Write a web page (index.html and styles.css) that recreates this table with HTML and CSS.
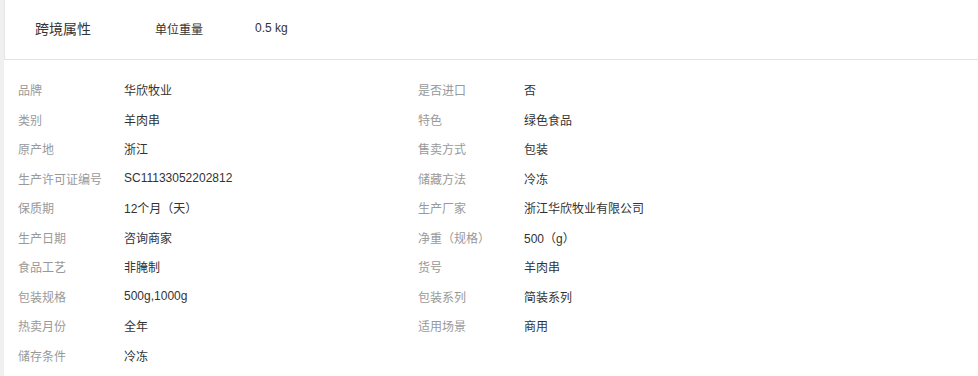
FILE: index.html
```html
<!DOCTYPE html>
<html lang="zh">
<head>
<meta charset="utf-8">
<link rel="stylesheet" href="styles.css">
</head>
<body>
<div class="card">
  <div class="head">
    <div class="head-title">跨境属性</div>
    <div class="head-label">单位重量</div>
    <div class="head-value">0.5 kg</div>
  </div>
  <div class="attrs">
    <div class="row"><span class="k">品牌</span><span class="v">华欣牧业</span></div>
    <div class="row"><span class="k">是否进口</span><span class="v">否</span></div>
    <div class="row"><span class="k">类别</span><span class="v">羊肉串</span></div>
    <div class="row"><span class="k">特色</span><span class="v">绿色食品</span></div>
    <div class="row"><span class="k">原产地</span><span class="v">浙江</span></div>
    <div class="row"><span class="k">售卖方式</span><span class="v">包装</span></div>
    <div class="row"><span class="k">生产许可证编号</span><span class="v">SC11133052202812</span></div>
    <div class="row"><span class="k">储藏方法</span><span class="v">冷冻</span></div>
    <div class="row"><span class="k">保质期</span><span class="v">12个月（天）</span></div>
    <div class="row"><span class="k">生产厂家</span><span class="v">浙江华欣牧业有限公司</span></div>
    <div class="row"><span class="k">生产日期</span><span class="v">咨询商家</span></div>
    <div class="row"><span class="k">净重（规格）</span><span class="v">500（g）</span></div>
    <div class="row"><span class="k">食品工艺</span><span class="v">非腌制</span></div>
    <div class="row"><span class="k">货号</span><span class="v">羊肉串</span></div>
    <div class="row"><span class="k">包装规格</span><span class="v">500g,1000g</span></div>
    <div class="row"><span class="k">包装系列</span><span class="v">简装系列</span></div>
    <div class="row"><span class="k">热卖月份</span><span class="v">全年</span></div>
    <div class="row"><span class="k">适用场景</span><span class="v">商用</span></div>
    <div class="row"><span class="k">储存条件</span><span class="v">冷冻</span></div>
  </div>
</div>
</body>
</html>
```
FILE: styles.css
```css
html, body {
  margin: 0;
  padding: 0;
}
body {
  background: #f0f0f0;
  font-family: "Liberation Sans", "Noto Sans CJK SC", sans-serif;
  color: #333;
  height: 376px;
  overflow: hidden;
}
.card {
  margin-left: 4px;
  background: #fff;
  min-height: 376px;
}
.head {
  display: flex;
  align-items: center;
  height: 56px;
  padding-bottom: 3px;
  border-left: 1px solid #e4e4e4;
  border-bottom: 1px solid #e4e4e4;
  box-sizing: content-box;
}
.head-title {
  font-size: 14px;
  color: #333;
  margin-left: 30px;
  width: 120px;
}
.head-label {
  font-size: 12px;
  color: #333;
  width: 100px;
}
.head-value {
  font-size: 12px;
  color: #333;
}
.attrs {
  display: grid;
  grid-template-columns: 400px 400px;
  padding: 15px 0 0 14px;
}
.row {
  display: flex;
  align-items: center;
  height: 29.5px;
  font-size: 12px;
}
.k {
  width: 106px;
  color: #999;
  flex-shrink: 0;
}
.v {
  color: #333;
}
```
